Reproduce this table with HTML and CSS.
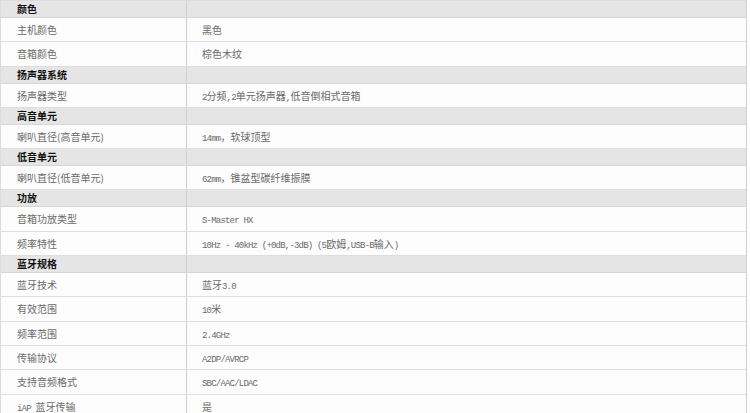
FILE: index.html
```html
<!DOCTYPE html>
<html lang="zh-CN">
<head>
<meta charset="utf-8">
<title>规格</title>
<link rel="stylesheet" href="styles.css">
</head>
<body>
<div class="spec">
  <div class="row group"><div class="k">颜色</div><div class="v"></div></div>
  <div class="row"><div class="k">主机颜色</div><div class="v">黑色</div></div>
  <div class="row"><div class="k">音箱颜色</div><div class="v">棕色木纹</div></div>

  <div class="row group"><div class="k">扬声器系统</div><div class="v"></div></div>
  <div class="row"><div class="k">扬声器类型</div><div class="v"><span class="en">2</span>分频<span class="en">,2</span>单元扬声器<span class="en">,</span>低音倒相式音箱</div></div>

  <div class="row group"><div class="k">高音单元</div><div class="v"></div></div>
  <div class="row"><div class="k">喇叭直径(高音单元)</div><div class="v"><span class="en">14mm</span>，软球顶型</div></div>

  <div class="row group"><div class="k">低音单元</div><div class="v"></div></div>
  <div class="row"><div class="k">喇叭直径(低音单元)</div><div class="v"><span class="en">62mm</span>，锥盆型碳纤维振膜</div></div>

  <div class="row group"><div class="k">功放</div><div class="v"></div></div>
  <div class="row"><div class="k">音箱功放类型</div><div class="v"><span class="en">S-Master HX</span></div></div>
  <div class="row"><div class="k">频率特性</div><div class="v"><span class="en">10Hz - 40kHz (+0dB,-3dB) (5</span>欧姆<span class="en">,USB-B</span>输入<span class="en">)</span></div></div>

  <div class="row group"><div class="k">蓝牙规格</div><div class="v"></div></div>
  <div class="row"><div class="k">蓝牙技术</div><div class="v">蓝牙<span class="en">3.0</span></div></div>
  <div class="row"><div class="k">有效范围</div><div class="v"><span class="en">10</span>米</div></div>
  <div class="row"><div class="k">频率范围</div><div class="v"><span class="en">2.4GHz</span></div></div>
  <div class="row"><div class="k">传输协议</div><div class="v"><span class="en">A2DP/AVRCP</span></div></div>
  <div class="row"><div class="k">支持音频格式</div><div class="v"><span class="en">SBC/AAC/LDAC</span></div></div>
  <div class="row"><div class="k"><span class="en">iAP&nbsp;</span>蓝牙传输</div><div class="v">是</div></div>
</div>
</body>
</html>
```

FILE: styles.css
```css
html, body {
  margin: 0;
  padding: 0;
  background: #ffffff;
}

body {
  font-family: "Noto Sans CJK SC", "Noto Sans", sans-serif;
  font-size: 10px;
  color: #6a6a6a;
}

.spec {
  width: 747px;
  border-top: 1px solid #dcdcdc;
  border-left: 1px solid #dcdcdc;
  border-right: 1px solid #d0d0d0;
  box-sizing: border-box;
}

.row {
  display: grid;
  grid-template-columns: 186px 1fr;
  height: 24.3px;
  line-height: 23.3px;
  box-sizing: border-box;
  border-bottom: 1px solid #dedede;
  background: #fdfdfd;
}

.row.group {
  height: 17px;
  line-height: 16px;
  background: #e5e5e5;
  border-bottom-color: #d6d6d6;
}

.k, .v {
  white-space: nowrap;
  overflow: hidden;
}

.k {
  padding-left: 16px;
  border-right: 1px solid #cfcfcf;
}

.v {
  padding-left: 15px;
}

.group .k {
  color: #111111;
  font-weight: 700;
}

.en {
  font-family: "Liberation Mono", "DejaVu Sans Mono", monospace;
  font-size: 9px;
  letter-spacing: -0.8px;
}
```
